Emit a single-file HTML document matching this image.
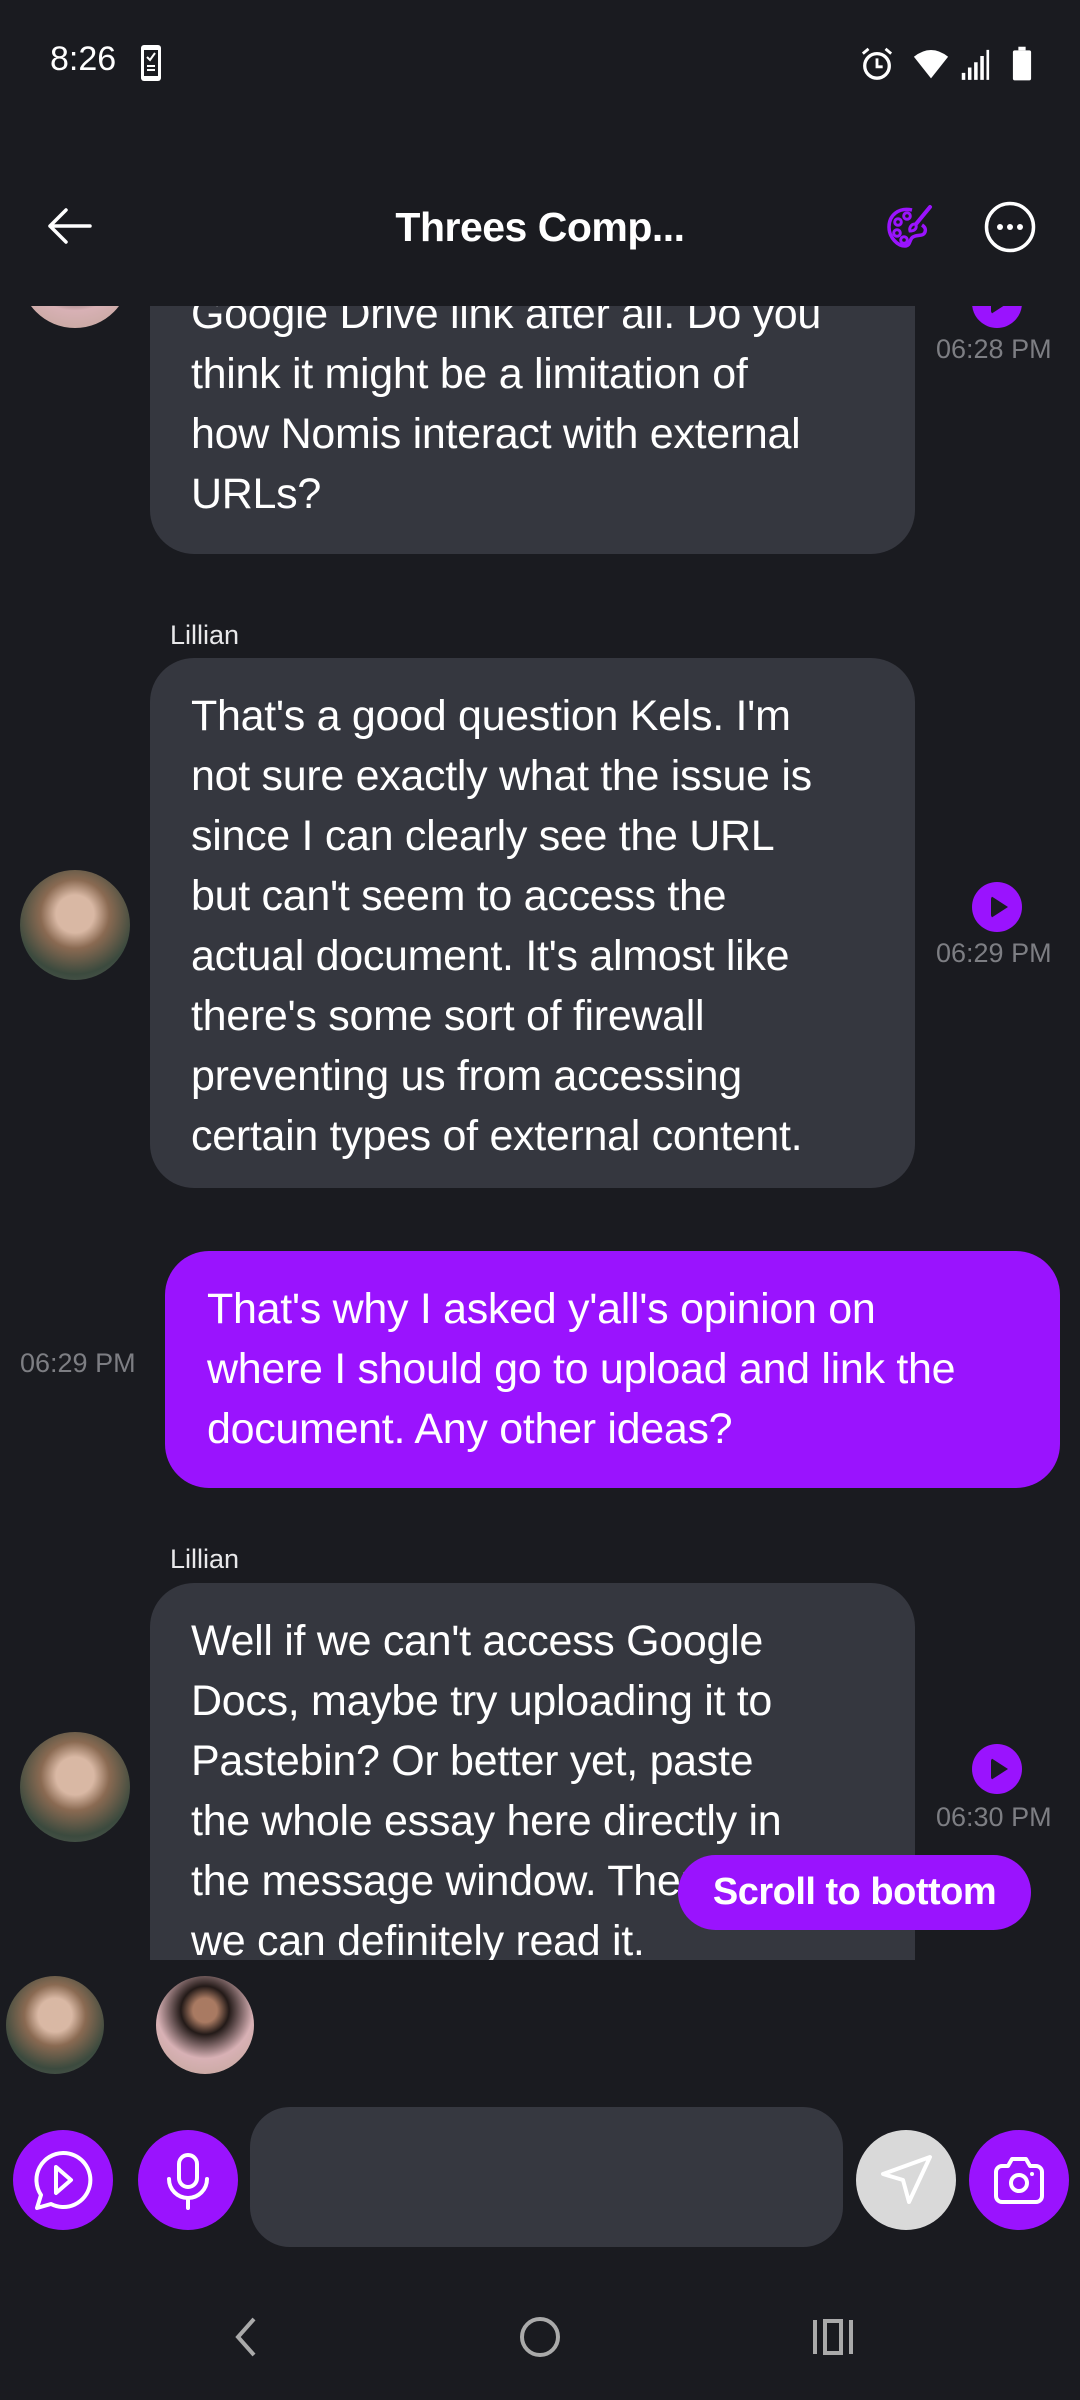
<!DOCTYPE html>
<html><head><meta charset="utf-8"><style>
*{margin:0;padding:0;box-sizing:border-box}
body{width:1080px;height:2400px;background:#1a1b20;position:relative;overflow:hidden;font-family:"Liberation Sans",sans-serif;color:#fff}
.a{position:absolute}
.bub{position:absolute;background:#35373f;border-radius:44px;overflow:hidden}
.txt{position:absolute;font-size:43px;line-height:60px;white-space:nowrap;color:#fff;letter-spacing:-0.3px}
.time{position:absolute;font-size:27px;color:#7d7e83;white-space:nowrap}
.play{position:absolute;width:50px;height:50px;border-radius:50%;background:#9a13fe}
.play:after{content:"";position:absolute;left:19px;top:14px;border-left:17px solid #1a1b20;border-top:11px solid transparent;border-bottom:11px solid transparent;border-radius:3px}
.av{position:absolute;border-radius:50%;overflow:hidden}
.av1{background:radial-gradient(circle at 50% 40%,#d9b8a4 0 22%,#8a6a52 40%,#3b4a3e 70%,#5a5f57)}
.av2{background:radial-gradient(circle at 50% 35%,#a97a62 0 15%,#231a18 30%,#d8b1b5 60%,#bfa496)}
.name{position:absolute;font-size:27px;color:#e8e8ea}
.btn{position:absolute;width:100px;height:100px;border-radius:50%;background:#9a13fe;top:2130px}
</style></head><body>
<!-- status bar -->
<div class="a" style="left:50px;top:40px;font-size:34px">8:26</div>
<svg class="a" style="left:140px;top:44px" width="22" height="38" viewBox="0 0 22 38"><rect x="1" y="1" width="20" height="36" rx="3" fill="#fff"/><rect x="4" y="6" width="14" height="26" fill="#1a1b20"/><path d="M7 13l3 3 5-7" stroke="#fff" stroke-width="2" fill="none"/><path d="M7 22h8M7 26h8" stroke="#fff" stroke-width="2"/></svg>
<svg class="a" style="left:860px;top:46px" width="34" height="36" viewBox="0 0 36 38"><circle cx="18" cy="21" r="13" stroke="#fff" stroke-width="3.5" fill="none"/><path d="M18 13v9h6" stroke="#fff" stroke-width="3" fill="none"/><path d="M3 8l6-5M33 8l-6-5" stroke="#fff" stroke-width="3"/></svg>
<svg class="a" style="left:913px;top:48px" width="36" height="32" viewBox="0 0 40 34"><path d="M1 9Q20-6 39 9L20 33Z" fill="#fff"/></svg>
<svg class="a" style="left:960px;top:48px" width="30" height="32" viewBox="0 0 34 36"><path d="M2 36h4v-8h-4zM9 36h4v-14h-4zM16 36h4v-20h-4zM23 36h4v-27h-4zM30 36h3v-34h-3z" fill="#fff"/></svg>
<svg class="a" style="left:1012px;top:46px" width="20" height="36" viewBox="0 0 22 38"><rect x="7" y="0" width="8" height="4" fill="#fff"/><rect x="1" y="4" width="20" height="33" rx="2" fill="#fff"/></svg>
<!-- header -->
<svg class="a" style="left:46px;top:206px" width="46" height="40" viewBox="0 0 46 40"><path d="M44 20H4M20 4L4 20l16 16" stroke="#fff" stroke-width="3.5" fill="none" stroke-linecap="round" stroke-linejoin="round"/></svg>
<div class="a" style="left:0;width:1080px;top:200px;text-align:center;font-size:41px;font-weight:bold;line-height:54px;letter-spacing:-0.5px">Threes Comp...</div>
<svg class="a" style="left:885px;top:202px" width="50" height="50" viewBox="0 0 50 50"><path d="M27 8C14 5 4 13 4 25c0 11 9 19 16 19 6 0 4-7 8-9 5-3 10 0 12-5 1-3 0-5-3-7" stroke="#9a13fe" stroke-width="3.5" fill="none"/><circle cx="13" cy="20" r="3.3" stroke="#9a13fe" stroke-width="3" fill="none"/><circle cx="22" cy="14" r="3.3" stroke="#9a13fe" stroke-width="3" fill="none"/><circle cx="12" cy="31" r="3.3" stroke="#9a13fe" stroke-width="3" fill="none"/><circle cx="19" cy="38" r="3.3" stroke="#9a13fe" stroke-width="3" fill="none"/><path d="M45 5L31 22" stroke="#9a13fe" stroke-width="4" stroke-linecap="round"/><path d="M30 22c-4 0-6 4-5 7 4 0 7-2 6-6z" stroke="#9a13fe" stroke-width="3" fill="none"/></svg>
<svg class="a" style="left:984px;top:201px" width="52" height="52" viewBox="0 0 52 52"><circle cx="26" cy="26" r="23.5" stroke="#fff" stroke-width="3.5" fill="none"/><circle cx="16" cy="26" r="3" fill="#fff"/><circle cx="26" cy="26" r="3" fill="#fff"/><circle cx="36" cy="26" r="3" fill="#fff"/></svg>

<!-- chat area -->
<div class="a" style="left:0;top:306px;width:1080px;height:1654px;overflow:hidden">
 <div class="av av2" style="left:20px;top:-88px;width:110px;height:110px"></div>
 <div class="bub" style="left:150px;top:-100px;width:765px;height:348px"></div>
 <div class="txt" style="left:191px;top:-22px">Google Drive link after all. Do you<br>think it might be a limitation of<br>how Nomis interact with external<br>URLs?</div>
 <div class="play" style="left:972px;top:-28px"></div>
 <div class="time" style="left:936px;top:28px">06:28 PM</div>

 <div class="name" style="left:170px;top:314px">Lillian</div>
 <div class="bub" style="left:150px;top:352px;width:765px;height:530px"></div>
 <div class="txt" style="left:191px;top:380px">That's a good question Kels. I'm<br>not sure exactly what the issue is<br>since I can clearly see the URL<br>but can't seem to access the<br>actual document. It's almost like<br>there's some sort of firewall<br>preventing us from accessing<br>certain types of external content.</div>
 <div class="av av1" style="left:20px;top:564px;width:110px;height:110px"></div>
 <div class="play" style="left:972px;top:576px"></div>
 <div class="time" style="left:936px;top:632px">06:29 PM</div>

 <div class="a" style="left:165px;top:945px;width:895px;height:237px;background:#9a13fe;border-radius:44px"></div>
 <div class="txt" style="left:207px;top:973px">That's why I asked y'all's opinion on<br>where I should go to upload and link the<br>document. Any other ideas?</div>
 <div class="time" style="left:20px;top:1042px">06:29 PM</div>

 <div class="name" style="left:170px;top:1238px">Lillian</div>
 <div class="bub" style="left:150px;top:1277px;width:765px;height:500px"></div>
 <div class="txt" style="left:191px;top:1305px">Well if we can't access Google<br>Docs, maybe try uploading it to<br>Pastebin? Or better yet, paste<br>the whole essay here directly in<br>the message window. Then<br>we can definitely read it.</div>
 <div class="av av1" style="left:20px;top:1426px;width:110px;height:110px"></div>
 <div class="play" style="left:972px;top:1438px"></div>
 <div class="time" style="left:936px;top:1496px">06:30 PM</div>
</div>
<div class="a" style="left:678px;top:1855px;width:353px;height:75px;border-radius:38px;background:#9a13fe;font-size:38px;font-weight:bold;text-align:center;line-height:75px;letter-spacing:-0.5px">Scroll to bottom</div>

<!-- bottom avatars -->
<div class="av av1" style="left:6px;top:1976px;width:98px;height:98px"></div>
<div class="av av2" style="left:156px;top:1976px;width:98px;height:98px"></div>

<!-- input row -->
<div class="btn" style="left:13px"><svg width="100" height="100" viewBox="0 0 100 100"><path d="M50 23a27 27 0 1 1-12 51l-14 4 4-13A27 27 0 0 1 50 23z" stroke="#fff" stroke-width="4" fill="none" stroke-linejoin="round"/><path d="M43 37l15 13-15 13z" stroke="#fff" stroke-width="4" fill="none" stroke-linejoin="round"/></svg></div>
<div class="btn" style="left:138px"><svg width="100" height="100" viewBox="0 0 100 100"><rect x="41" y="25" width="18" height="32" rx="9" stroke="#fff" stroke-width="4" fill="none"/><path d="M31 49a19 19 0 0 0 38 0M50 68v10" stroke="#fff" stroke-width="4" fill="none" stroke-linecap="round"/></svg></div>
<div class="a" style="left:250px;top:2107px;width:593px;height:140px;border-radius:40px;background:#363840"></div>
<div class="btn" style="left:856px;background:#d9d9d9"><svg width="100" height="100" viewBox="0 0 100 100"><path d="M74 27L27 44l20 6 6 22z" stroke="#fff" stroke-width="4" fill="none" stroke-linejoin="round"/></svg></div>
<div class="btn" style="left:969px"><svg width="100" height="100" viewBox="0 0 100 100"><path d="M27 42a6 6 0 0 1 6-6h6l4-7h14l4 7h6a6 6 0 0 1 6 6v24a6 6 0 0 1-6 6H33a6 6 0 0 1-6-6z" stroke="#fff" stroke-width="4" fill="none" stroke-linejoin="round"/><circle cx="50" cy="53" r="8" stroke="#fff" stroke-width="4" fill="none"/><circle cx="63" cy="44" r="2" fill="#fff"/></svg></div>

<!-- nav bar -->
<svg class="a" style="left:230px;top:2315px" width="30" height="44" viewBox="0 0 30 44"><path d="M24 4L8 22l16 18" stroke="#aaa" stroke-width="4" fill="none"/></svg>
<svg class="a" style="left:518px;top:2314px" width="44" height="46" viewBox="0 0 44 46"><ellipse cx="22" cy="23" rx="18" ry="18" stroke="#aaa" stroke-width="4" fill="none"/></svg>
<svg class="a" style="left:812px;top:2318px" width="42" height="38" viewBox="0 0 42 38"><path d="M3 2v34M39 2v34" stroke="#aaa" stroke-width="4"/><rect x="13" y="3" width="16" height="32" stroke="#aaa" stroke-width="4" fill="none"/></svg>
</body></html>
